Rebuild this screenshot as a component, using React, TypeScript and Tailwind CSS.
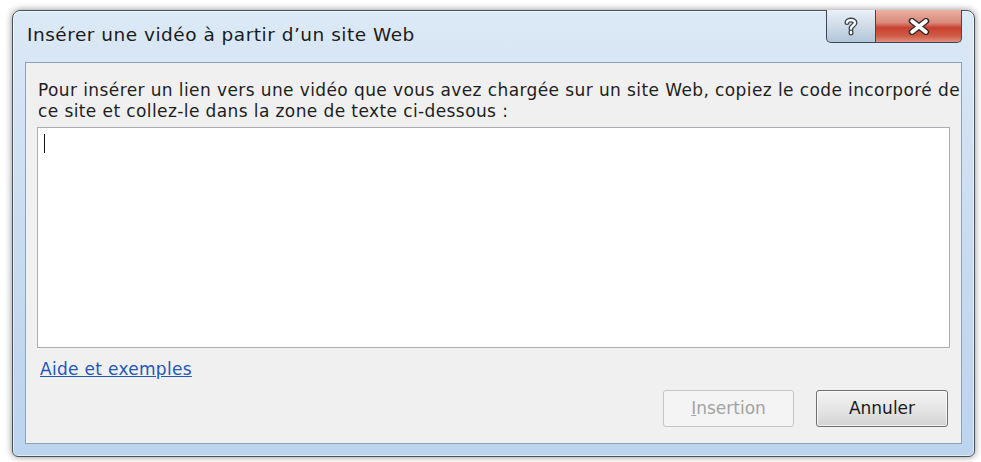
import React from 'react';

const font = { fontFamily: '"DejaVu Sans", "Open Sans", "Liberation Sans", sans-serif' };

function HelpGlyph() {
  return (
    <svg width="14" height="19" viewBox="0 0 14 19">
      <path
        d="M3 5.5 C3 2.5 11 2 11 5.8 C11 8.5 7 8.5 7 11.5 M7 15 L7 16"
        fill="none"
        stroke="#3b4450"
        strokeWidth="5"
        strokeLinecap="round"
      />
      <path
        d="M3 5.5 C3 2.5 11 2 11 5.8 C11 8.5 7 8.5 7 11.5 M7 15 L7 16"
        fill="none"
        stroke="#ffffff"
        strokeWidth="2.4"
        strokeLinecap="round"
      />
    </svg>
  );
}

function CloseGlyph() {
  return (
    <svg width="22" height="17" viewBox="0 0 22 17">
      <path d="M4 3 L18 14 M18 3 L4 14" stroke="#3a2a28" strokeWidth="6.5" strokeLinecap="round" />
      <path d="M4 3 L18 14 M18 3 L4 14" stroke="#ffffff" strokeWidth="3.6" strokeLinecap="round" />
    </svg>
  );
}

export default function App() {
  return (
    <div className="w-[981px] h-[462px] bg-white overflow-hidden pt-[10px] pl-[12px]" style={font}>
      <div className="w-[963px] h-[447px] flex flex-col px-[12px] pb-[12px] rounded-t-[8px] rounded-b-[6px] border border-[#48525e] bg-gradient-to-b from-[#dce9f6] via-[#c9dcf0] to-[#bcd4ee] shadow-[0_0_7px_rgba(0,0,0,0.45),inset_0_0_0_1px_rgba(255,255,255,0.55)]">
        {/* title bar */}
        <div className="h-[51px] flex items-start">
          <div className="flex-1 pt-[12px] pl-[2px] text-[18.5px] leading-[23px] tracking-[0.5px] text-[#1b1b1b]">
            Insérer une vidéo à partir d’un site Web
          </div>
          <div className="flex -mt-px">
            <div className="w-[50px] h-[33px] flex items-center justify-center rounded-bl-[5px] border border-t-0 border-[#3e4854] bg-gradient-to-b from-[#e9f0f7] via-[#cfdbe7] to-[#b2c5d8]">
              <HelpGlyph />
            </div>
            <div className="w-[86px] h-[33px] flex items-center justify-center rounded-br-[5px] border border-t-0 border-l-0 border-[#3e4854] bg-[linear-gradient(to_bottom,#eab0a3_0%,#d98a7a_40%,#c8412f_55%,#cf5a45_80%,#de9080_100%)]">
              <CloseGlyph />
            </div>
          </div>
        </div>

        {/* client area */}
        <div className="flex-1 flex flex-col border border-[#8ea2b7] bg-[#f0f0f0] pt-[17px] px-[11px]">
          <p className="pl-[1px] text-[17px] leading-[21px] tracking-[0.4px] text-[#1e1e1e] whitespace-nowrap">
            Pour insérer un lien vers une vidéo que vous avez chargée sur un site Web, copiez le code incorporé de
            <br />
            ce site et collez-le dans la zone de texte ci-dessous :
          </p>
          <div className="mt-[5px] h-[221px] border border-[#abadb3] bg-white">
            <div className="mt-[6px] ml-[6px] w-px h-[19px] bg-[#111]" />
          </div>
          <div className="mt-[11px] pl-[3px] text-[17px] leading-[21px] tracking-[0.3px]">
            <a href="#" className="text-[#2457b8] underline">Aide et exemples</a>
          </div>
          <div className="mt-[10px] pr-[2px] flex justify-end gap-[22px]">
            <button className="w-[131px] h-[37px] rounded-[3px] border border-[#c2c5c8] bg-[#f4f4f4] text-[17px] text-[#a3a3a3]">
              <span className="underline">I</span>nsertion
            </button>
            <button className="w-[132px] h-[37px] rounded-[3px] border border-[#707070] bg-gradient-to-b from-[#f3f3f3] via-[#e6e6e6] to-[#d3d3d3] shadow-[inset_0_0_0_1px_rgba(255,255,255,0.7)] text-[17px] text-[#1a1a1a]">
              Annuler
            </button>
          </div>
        </div>
      </div>
    </div>
  );
}
